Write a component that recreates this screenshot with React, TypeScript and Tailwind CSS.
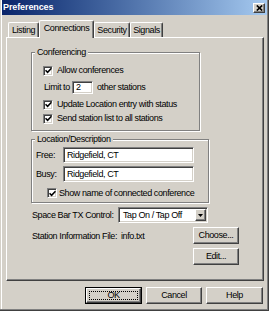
import React from "react";

const raised =
  "border border-t-white border-l-white border-r-[#404040] border-b-[#404040] shadow-[inset_-1px_-1px_0_#808080] bg-[#d4d0c8]";
const sunken =
  "border border-t-[#808080] border-l-[#808080] border-r-white border-b-white shadow-[inset_1px_1px_0_#404040,inset_-1px_-1px_0_#d4d0c8] bg-white";
const groupBox =
  "relative border border-[#808080] shadow-[1px_1px_0_#fff,inset_1px_1px_0_#fff]";

function Check() {
  return (
    <span className={`flex h-[10px] w-[10px] shrink-0 items-center justify-center ${sunken}`}>
      <svg width="7" height="7" viewBox="0 0 7 7">
        <path d="M0.5 3.2 L2.6 5.3 L6.5 1.2" stroke="#000" strokeWidth="1.6" fill="none" />
      </svg>
    </span>
  );
}

function Tab({ label, selected, className }: { label: string; selected?: boolean; className: string }) {
  return (
    <div
      className={`flex items-center justify-center rounded-t-[2px] border-t border-l border-r border-t-white border-l-white border-r-[#404040] shadow-[inset_-1px_0_0_#808080] bg-[#d4d0c8] ${
        selected ? "relative z-10 -mb-[1px] h-[18px] pb-[2px]" : "h-[15px]"
      } ${className}`}
    >
      {label}
    </div>
  );
}

export default function App() {
  return (
    <div className="flex h-[311px] w-[269px] flex-col overflow-hidden bg-[#d4d0c8] px-[2px] font-['Liberation_Sans',Arial,sans-serif] text-[9px] leading-[11px] tracking-[-0.4px] text-black shadow-[inset_-1px_-1px_0_#404040,inset_-2px_-2px_0_#808080,inset_1px_0_0_#d4d0c8,inset_2px_0_0_#fff]">
      {/* Title bar */}
      <div className="flex h-[15px] shrink-0 items-center justify-between bg-linear-to-r from-[#0a246a] to-[#a6caf0] pl-[1px] pr-[2px]">
        <span className="text-[9px] font-bold tracking-[-0.1px] text-white">Preferences</span>
        <div className={`flex h-[10px] w-[12px] items-center justify-center ${raised}`}>
          <svg width="7" height="6" viewBox="0 0 7 6">
            <path d="M0.8 0.5 L6.2 5.5 M6.2 0.5 L0.8 5.5" stroke="#000" strokeWidth="1.7" fill="none" />
          </svg>
        </div>
      </div>

      <div className="flex flex-col pl-[4px] pt-[5px]">
        {/* Tabs */}
        <div className="flex h-[17px] items-end pl-[2px]">
          <Tab label="Listing" className="w-[31px]" />
          <Tab label="Connections" selected className="w-[55px]" />
          <Tab label="Security" className="w-[36px]" />
          <Tab label="Signals" className="w-[33px]" />
        </div>

        {/* Panel */}
        <div className={`flex h-[244px] w-[258px] flex-col pl-[24px] pt-[14px] ${raised}`}>
          {/* Conferencing */}
          <div className={`flex h-[79px] w-[169px] flex-col pl-[11px] pt-[11px] ${groupBox}`}>
            <span className="absolute -top-[6px] left-[3px] bg-[#d4d0c8] px-[2px]">Conferencing</span>
            <div className="flex h-[13px] items-center gap-[4px]">
              <Check />
              <span>Allow conferences</span>
            </div>
            <div className="mt-[4px] flex h-[13px] items-center">
              <span className="ml-[1px] w-[28px]">Limit to</span>
              <div className={`flex h-[13px] w-[21px] items-center pl-[3px] ${sunken}`}>2</div>
              <span className="ml-[4px]">other stations</span>
            </div>
            <div className="mt-[4px] flex h-[13px] items-center gap-[4px]">
              <Check />
              <span>Update Location entry with status</span>
            </div>
            <div className="mt-[1px] flex h-[13px] items-center gap-[4px]">
              <Check />
              <span>Send station list to all stations</span>
            </div>
          </div>

          {/* Location/Description */}
          <div className={`mt-[8px] flex h-[64px] w-[178px] flex-col pl-[4px] pt-[7px] ${groupBox}`}>
            <span className="absolute -top-[6px] left-[3px] bg-[#d4d0c8] px-[2px]">Location/Description</span>
            <div className="flex h-[16px] items-center">
              <span className="w-[27px]">Free:</span>
              <div className={`flex h-[16px] w-[131px] items-center pl-[3px] ${sunken}`}>Ridgefield, CT</div>
            </div>
            <div className="mt-[3px] flex h-[16px] items-center">
              <span className="w-[27px]">Busy:</span>
              <div className={`flex h-[16px] w-[131px] items-center pl-[3px] ${sunken}`}>Ridgefield, CT</div>
            </div>
            <div className="ml-[11px] mt-[5px] flex h-[12px] items-center gap-[2px]">
              <Check />
              <span>Show name of connected conference</span>
            </div>
          </div>

          {/* Space bar */}
          <div className="mt-[4px] flex h-[16px] items-center">
            <span className="ml-[1px] w-[86px]">Space Bar TX Control:</span>
            <div className={`flex h-[16px] w-[90px] items-center justify-between pl-[4px] pr-[1px] ${sunken}`}>
              <span>Tap On / Tap Off</span>
              <div className={`flex h-[12px] w-[11px] items-center justify-center ${raised}`}>
                <svg width="5" height="3" viewBox="0 0 5 3">
                  <path d="M0 0 H5 L2.5 3 Z" fill="#000" />
                </svg>
              </div>
            </div>
          </div>

          {/* Station info */}
          <div className="mt-[4px] flex items-start">
            <span className="ml-[1px] flex h-[17px] w-[89px] items-center pt-[2px]">Station Information File:</span>
            <span className="flex h-[17px] w-[72px] items-center pt-[2px]">info.txt</span>
            <div className="flex flex-col gap-[4px]">
              <div className={`flex h-[17px] w-[46px] items-center justify-center ${raised}`}>Choose...</div>
              <div className={`flex h-[17px] w-[46px] items-center justify-center ${raised}`}>Edit...</div>
            </div>
          </div>
        </div>

        {/* Dialog buttons */}
        <div className="ml-[79px] mt-[6px] flex gap-[4px]">
          <div className="h-[17px] w-[57px] border border-black">
            <div className={`flex h-full w-full p-[2px] ${raised}`}>
              <span className="flex flex-1 items-center justify-center border border-dotted border-black">OK</span>
            </div>
          </div>
          <div className={`flex h-[17px] w-[56px] items-center justify-center ${raised}`}>Cancel</div>
          <div className={`flex h-[17px] w-[57px] items-center justify-center ${raised}`}>Help</div>
        </div>
      </div>
    </div>
  );
}
